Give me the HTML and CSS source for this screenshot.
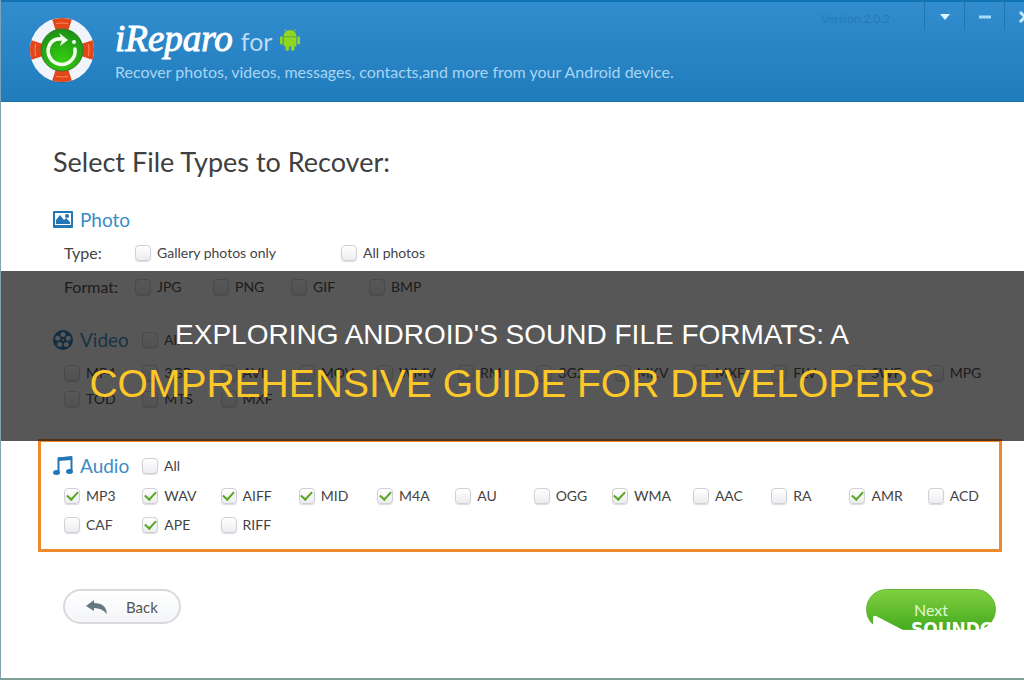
FILE: index.html
```html
<!DOCTYPE html>
<html lang="en">
<head>
<meta charset="utf-8">
<title>iReparo for Android</title>
<link rel="stylesheet" href="styles.css">
</head>
<body>
<div class="window">
  <header class="header">
    <svg class="logo" viewBox="0 0 66 66" aria-hidden="true">
      <defs>
        <radialGradient id="green" cx="50%" cy="75%" r="75%"><stop offset="0" stop-color="#35cf10"/><stop offset="1" stop-color="#1d8f17"/></radialGradient>
      </defs>
      <ellipse cx="33" cy="36" rx="30" ry="30" fill="#1b5f96" opacity=".5"/>
      <circle cx="33" cy="33" r="26" fill="none" stroke="#f1f4fa" stroke-width="12"/>
      <circle cx="33" cy="33" r="26" fill="none" stroke="#e2471c" stroke-width="12" pathLength="360" stroke-dasharray="36 54" stroke-dashoffset="18"/>
      <circle cx="33" cy="33" r="27" fill="none" stroke="#ff8a5c" stroke-width="1" pathLength="360" stroke-dasharray="26 64" stroke-dashoffset="13"/>
      <circle cx="33" cy="33" r="21" fill="url(#green)" stroke="#2b7d2b" stroke-width="1"/>
      <path d="M20.500 28A13.500 13.500 0 1 0 46 32" fill="none" stroke="#f4fff0" stroke-width="3.500" stroke-linecap="round"/>
      <path d="M20.500 28Q24 21 33 22" fill="none" stroke="#f4fff0" stroke-width="3.500"/>
      <path d="M30 16L39 23L31 29L33 23Z" fill="#f4fff0"/>
      <circle cx="45" cy="25" r="2" fill="#f4fff0"/>
    </svg>
    <div class="brand">
      <h1 class="brand-name"><em>iReparo</em> <span>for</span>
        <svg class="robot" viewBox="0 0 22 24" aria-label="Android"><g fill="#8fd620"><path d="M4 8A7 7 0 0 1 18 8Z"/><rect x="4" y="8" width="14" height="11" rx="1"/><rect x="0" y="8" width="3" height="9" rx="1.500"/><rect x="19" y="8" width="3" height="9" rx="1.500"/><rect x="6" y="17" width="4" height="7" rx="2"/><rect x="12" y="17" width="4" height="7" rx="2"/></g><path d="M5 0L8 4M17 0L14 4" stroke="#8fd620"/><path d="M4 8.500H18" stroke="#5fae3c"/></svg>
      </h1>
      <p class="tagline">Recover photos, videos, messages, contacts,and more from your Android device.</p>
    </div>
    <span class="version">Version:2.0.2</span>
    <div class="controls">
      <button aria-label="Menu"><svg viewBox="0 0 14 14"><path d="M2 4H12L7 10Z" fill="#dff4ff"/></svg></button>
      <button aria-label="Minimize"><svg viewBox="0 0 14 14"><path d="M1 7H13" stroke="#a5dcfa" stroke-width="3"/></svg></button>
      <button aria-label="Close"><svg viewBox="0 0 14 14"><path d="M2 2L12 12M12 2L2 12" stroke="#c5eafd" stroke-width="3"/></svg></button>
    </div>
  </header>

  <main class="content">
    <h2 class="title">Select File Types to Recover:</h2>

    <section class="photo">
      <div class="head">
        <svg class="icon" viewBox="0 0 20 20" aria-hidden="true"><rect y="1" width="20" height="17" rx="1" fill="#2277b4"/><rect x="2" y="3" width="16" height="12" fill="#fff"/><path d="M3 14V10L7 5L11 10L13 8L17 12V14Z" fill="#2277b4"/><circle cx="14" cy="6" r="2" fill="#2277b4"/></svg>
        <h3>Photo</h3>
      </div>
      <div class="options">
        <span class="caption">Type:</span>
        <label class="wide"><input type="checkbox">Gallery photos only</label>
        <label class="wide"><input type="checkbox">All photos</label>
      </div>
      <div class="options">
        <span class="caption">Format:</span>
        <label><input type="checkbox">JPG</label>
        <label><input type="checkbox">PNG</label>
        <label><input type="checkbox">GIF</label>
        <label><input type="checkbox">BMP</label>
      </div>
    </section>

    <section class="video">
      <div class="head">
        <svg class="icon" viewBox="0 0 20 20" aria-hidden="true"><circle cx="10" cy="10" r="10" fill="#2277b4"/><g fill="#fff"><circle cx="10" cy="4.500" r="2.500"/><circle cx="15.300" cy="8.300" r="2.500"/><circle cx="13.300" cy="14.500" r="2.500"/><circle cx="6.700" cy="14.500" r="2.500"/><circle cx="4.700" cy="8.300" r="2.500"/><circle cx="10" cy="10" r="1"/></g></svg>
        <h3>Video</h3>
        <label><input type="checkbox">All</label>
      </div>
      <div class="formats">
        <label><input type="checkbox">MP4</label>
        <label><input type="checkbox">3GP</label>
        <label><input type="checkbox">AVI</label>
        <label><input type="checkbox">MOV</label>
        <label><input type="checkbox">WMV</label>
        <label><input type="checkbox">RM</label>
        <label><input type="checkbox">3G2</label>
        <label><input type="checkbox">MKV</label>
        <label><input type="checkbox">MXF</label>
        <label><input type="checkbox">FLV</label>
        <label><input type="checkbox">SWF</label>
        <label><input type="checkbox">MPG</label>
        <label><input type="checkbox">TOD</label>
        <label><input type="checkbox">MTS</label>
        <label><input type="checkbox">MXF</label>
      </div>
    </section>

    <section class="audio">
      <div class="head">
        <svg class="icon" viewBox="0 0 20 20" aria-hidden="true"><path d="M5.500 16V2.500L18.500 1.500V15" fill="none" stroke="#2277b4" stroke-width="2"/><path d="M5 1.500L19 0V4L5 5Z" fill="#2277b4"/><ellipse cx="3.500" cy="16.500" rx="3.500" ry="2.500" fill="#2277b4"/><ellipse cx="16.500" cy="15.500" rx="3.500" ry="2.500" fill="#2277b4"/></svg>
        <h3>Audio</h3>
        <label><input type="checkbox">All</label>
      </div>
      <div class="formats">
        <label><input type="checkbox" checked>MP3</label>
        <label><input type="checkbox" checked>WAV</label>
        <label><input type="checkbox" checked>AIFF</label>
        <label><input type="checkbox" checked>MID</label>
        <label><input type="checkbox" checked>M4A</label>
        <label><input type="checkbox">AU</label>
        <label><input type="checkbox">OGG</label>
        <label><input type="checkbox" checked>WMA</label>
        <label><input type="checkbox">AAC</label>
        <label><input type="checkbox">RA</label>
        <label><input type="checkbox" checked>AMR</label>
        <label><input type="checkbox">ACD</label>
        <label><input type="checkbox">CAF</label>
        <label><input type="checkbox" checked>APE</label>
        <label><input type="checkbox">RIFF</label>
      </div>
    </section>

    <footer class="actions">
      <button class="back"><svg viewBox="0 0 22 16" aria-hidden="true"><path d="M0 7L8 1V4Q20 4 21 15Q16 9 8 9V12Z" fill="#647880"/></svg>Back</button>
      <div class="next-wrap">
        <button class="next">Next</button>
        <div class="watermark"><svg viewBox="0 0 34 30" aria-hidden="true"><path d="M2 3Q2 0 5 1L32 15L5 29Q2 30 2 27Z" fill="#fff"/></svg><span>SOUNDC</span></div>
      </div>
    </footer>
  </main>

  <div class="banner">
    <p class="banner-top">EXPLORING ANDROID'S SOUND FILE FORMATS: A</p>
    <p class="banner-main">COMPREHENSIVE GUIDE FOR DEVELOPERS</p>
  </div>
</div>
</body>
</html>
```
FILE: styles.css
```css
* { box-sizing: border-box; }
body { margin: 0; background: #fff; color: #444; font: 14px/20px Lato, sans-serif; }
h1, h2, h3, p { margin: 0; font-weight: 400; }
button { font-family: inherit; cursor: pointer; }

.window {
  position: relative;
  display: flex;
  flex-direction: column;
  min-height: 100vh;
  overflow: hidden;
  border-left: 1px solid #7fa3b5;
  border-bottom: 2px solid #7d9f98;
}

.header {
  display: flex;
  align-items: flex-start;
  height: 102px;
  padding-left: 28px;
  border-top: 2px solid #1172b4;
  border-bottom: 1px solid #1c70aa;
  background: linear-gradient(#328dcf, #207cbb);
}
.logo { width: 66px; height: 66px; margin-top: 15px; }
.brand { flex: 1; margin: 17px 0 0 20px; }
.brand-name { display: flex; align-items: baseline; gap: 8px; color: #b9dcf4; font-size: 25px; line-height: 40px; }
.brand-name em { color: #fff; font: italic 37px/40px "Liberation Serif", serif; -webkit-text-stroke: 1px #fff; }
.robot { width: 20px; height: 24px; align-self: center; }
.tagline { color: #a9d5f3; font-size: 16px; line-height: 22px; white-space: nowrap; }
.version { margin: 8px 34px 0 0; color: #2679b3; font-size: 12px; line-height: 18px; }
.controls { display: flex; margin-right: -20px; }
.controls button {
  width: 40px;
  height: 28px;
  padding: 4px 0 0;
  border: 0;
  border-left: 1px solid #2274ae;
  background: none;
}
.controls svg { width: 14px; height: 14px; }

.content { flex: 1; padding: 40px 22px 32px 37px; }
.title { padding-left: 15px; color: #404040; font-size: 27px; line-height: 40px; }

.head { display: flex; align-items: center; height: 30px; }
.head h3 { width: 62px; color: #3a8cc4; font-size: 19px; line-height: 30px; }
.icon { width: 20px; height: 20px; margin-right: 7px; }

label { display: flex; align-items: center; gap: 6px; white-space: nowrap; }
input {
  appearance: none;
  display: grid;
  place-items: center;
  flex: none;
  width: 16px;
  height: 16px;
  margin: 0;
  border: 1px solid #d0d0d4;
  border-radius: 4px;
  background: linear-gradient(#fff, #ededf1);
  box-shadow: 0 1px 1px #dcdce0;
}
input:checked::after {
  content: "";
  width: 9px;
  height: 5px;
  margin-bottom: 3px;
  border: solid #57a820;
  border-width: 0 0 2px 2px;
  transform: rotate(-47deg);
}

.photo { padding: 23px 0 0 15px; }
.options {
  display: grid;
  grid-template-columns: 49px repeat(4, 56px);
  column-gap: 22px;
  align-items: center;
  height: 31px;
  padding-left: 11px;
}
.options:nth-child(2) { height: 36px; }
.options .caption { font-size: 16px; }
.options .wide { grid-column: span 2; }
.options .wide + .wide { margin-left: 50px; }

.video { padding: 23px 18px 0 15px; }
.formats { display: grid; grid-template-columns: repeat(12, 1fr); column-gap: 22px; row-gap: 6px; padding-left: 11px; }
.video .formats { margin-top: 8px; }

.audio { margin-top: 30px; padding: 9px 15px 14px 12px; border: 3px solid #ef8a2c; }
.audio .formats { margin-top: 5px; row-gap: 9px; }

.actions { display: flex; justify-content: space-between; align-items: flex-start; margin: 37px 6px 0 25px; }
.back {
  display: flex;
  align-items: center;
  gap: 18px;
  height: 35px;
  padding: 0 21px;
  border: 2px solid #d9d9de;
  border-radius: 18px;
  background: linear-gradient(#fff, #f3f5f7);
  color: #555;
  font-size: 15px;
}
.back svg { width: 22px; height: 16px; }
.next-wrap { position: relative; }
.next {
  width: 130px;
  height: 41px;
  border: 1px solid #62b53a;
  border-radius: 21px;
  background: linear-gradient(#80d040, #46ac1e);
  color: #e0fbcf;
  font-size: 16px;
}
.watermark {
  position: absolute;
  left: 5px;
  top: 26px;
  display: flex;
  align-items: flex-start;
  gap: 6px;
  color: #fff;
  font: bold 17px/28px "DejaVu Sans", sans-serif;
  pointer-events: none;
}
.watermark svg { width: 34px; height: 30px; }

.banner {
  position: absolute;
  top: 271px;
  left: -1px;
  right: 0;
  display: flex;
  flex-direction: column;
  justify-content: center;
  gap: 4px;
  height: 170px;
  padding-top: 12px;
  background: rgba(12, 12, 12, .69);
  font-family: "Liberation Sans", Arial, sans-serif;
  text-align: center;
  white-space: nowrap;
}
.banner-top { color: #fff; font-size: 28px; line-height: 40px; }
.banner-main { color: #fcc729; font-size: 39px; line-height: 50px; }
```
